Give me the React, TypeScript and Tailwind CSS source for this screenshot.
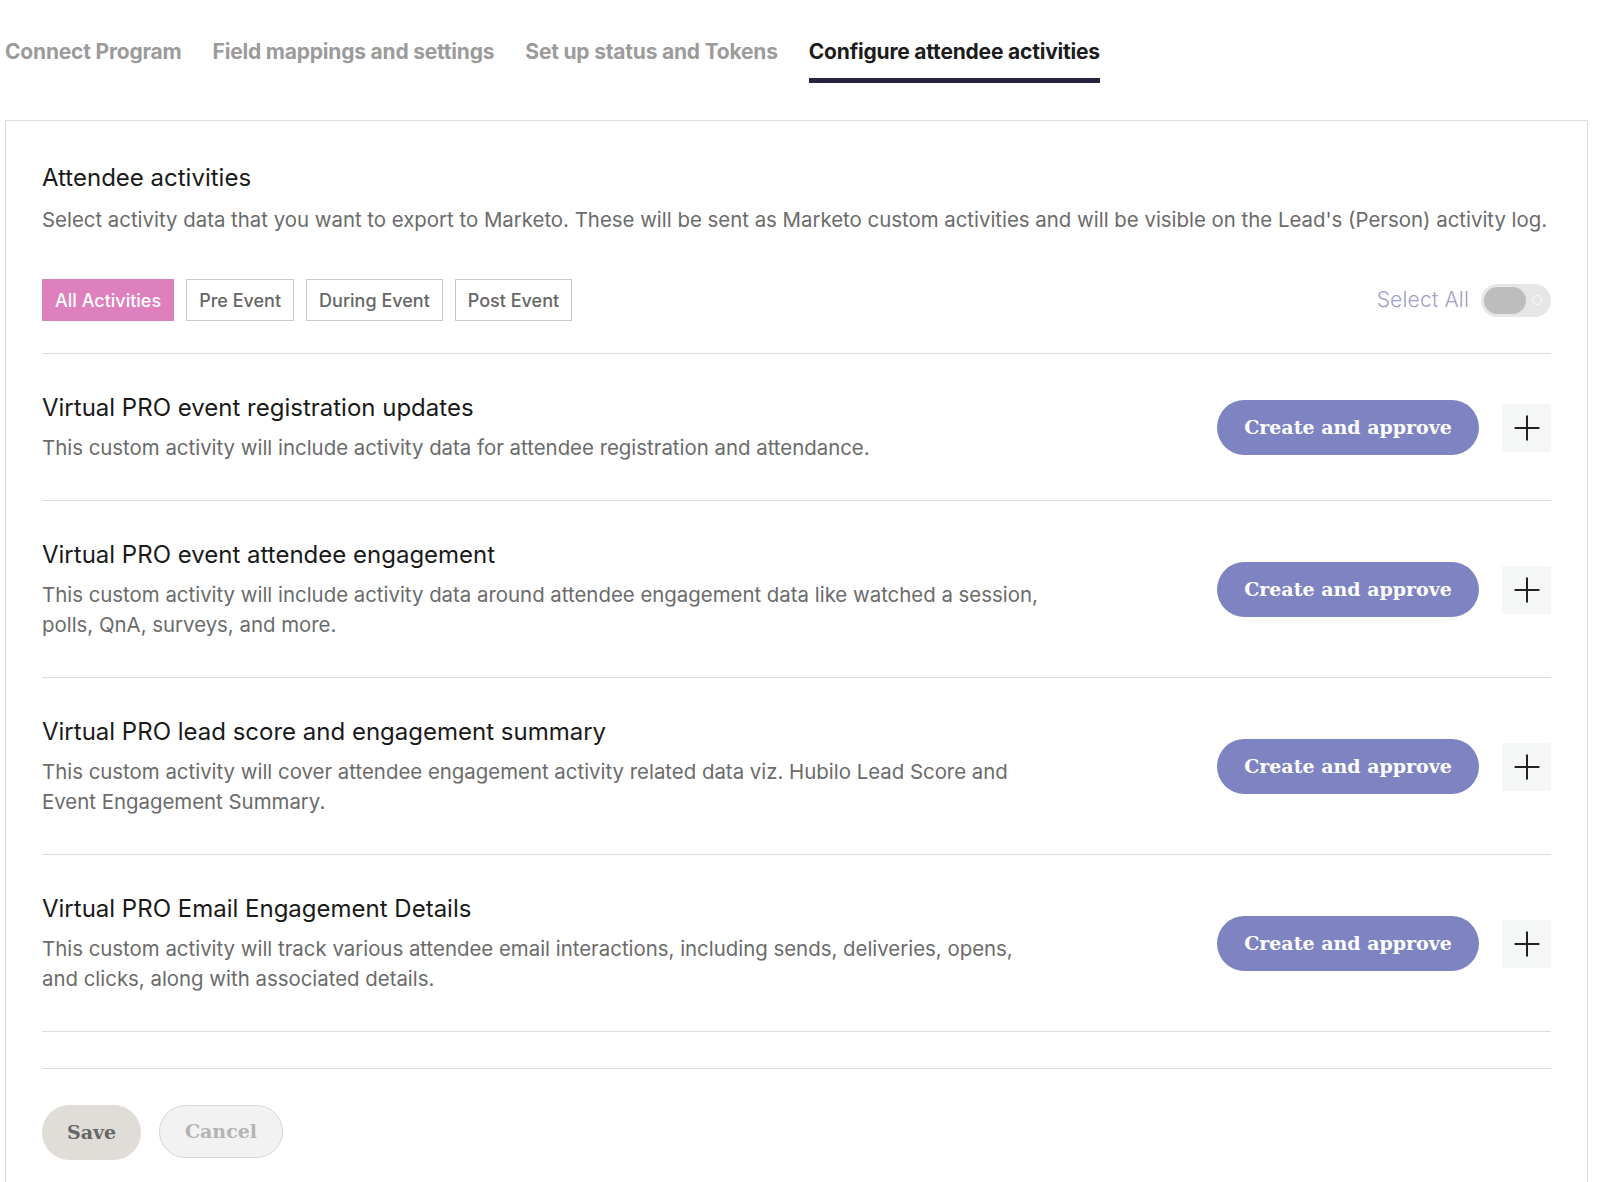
import { Plus } from "lucide-react";

const tabs = [
  { label: "Connect Program", active: false },
  { label: "Field mappings and settings", active: false },
  { label: "Set up status and Tokens", active: false },
  { label: "Configure attendee activities", active: true },
];

const filters = ["All Activities", "Pre Event", "During Event", "Post Event"];

const activities = [
  {
    title: "Virtual PRO event registration updates",
    text: "This custom activity will include activity data for attendee registration and attendance.",
  },
  {
    title: "Virtual PRO event attendee engagement",
    text: "This custom activity will include activity data around attendee engagement data like watched a session, polls, QnA, surveys, and more.",
  },
  {
    title: "Virtual PRO lead score and engagement summary",
    text: "This custom activity will cover attendee engagement activity related data viz. Hubilo Lead Score and Event Engagement Summary.",
  },
  {
    title: "Virtual PRO Email Engagement Details",
    text: "This custom activity will track various attendee email interactions, including sends, deliveries, opens, and clicks, along with associated details.",
  },
];

export default function App() {
  return (
    <div className="min-h-screen bg-white pl-[5px] pr-[18px] pt-[37px] font-['Inter',sans-serif]">
      {/* step tabs */}
      <nav className="flex gap-[31px]">
        {tabs.map((t) => (
          <div
            key={t.label}
            className={
              t.active
                ? "border-b-[5px] border-[#25243f] pb-[11px] text-[21px] font-bold leading-[30px] tracking-[-0.2px] text-[#1c1c1c]"
                : "border-b-[5px] border-transparent pb-[11px] text-[21px] font-bold leading-[30px] tracking-[-0.2px] text-[#9b9b9b]"
            }
          >
            {t.label}
          </div>
        ))}
      </nav>

      <div className="mt-[37px] border border-[#dcdcdc] px-[36px] pb-[40px] pt-[41px]">
        <h2 className="text-[24px] leading-[32px] text-[#1a1a1a]">Attendee activities</h2>
        <p className="mt-[11px] text-[20.4px] leading-[30px] text-[#6b6b6b]">
          Select activity data that you want to export to Marketo. These will be sent as Marketo custom activities and will be visible on the Lead's (Person) activity log.
        </p>

        <div className="mb-[32px] mt-[44px] flex items-center justify-between">
          <div className="flex gap-[12px]">
            {filters.map((f, i) => (
              <button
                key={f}
                className={
                  i === 0
                    ? "h-[42px] border border-[#de80be] bg-[#de80be] px-[12px] text-[18px] font-medium text-white"
                    : "h-[42px] border border-[#c9c9c9] bg-white px-[12px] text-[18px] font-medium text-[#666666]"
                }
              >
                {f}
              </button>
            ))}
          </div>
          <div className="flex items-center gap-[12px]">
            <span className="text-[21px] font-light tracking-[0.2px] text-[#a29dc8]">Select All</span>
            <div className="flex h-[33px] w-[70px] items-center justify-between rounded-full bg-[#e6e6e6] pl-[3px] pr-[9px]">
              <div className="h-[27px] w-[42px] rounded-full bg-[#bdbdbd]" />
              <div className="h-[10px] w-[10px] rounded-full border border-white" />
            </div>
          </div>
        </div>

        <div className="border-t border-[#dcdcdc]">
          {activities.map((a) => (
            <div
              key={a.title}
              className="flex items-center justify-between border-b border-[#dcdcdc] pb-[37px] pt-[38px]"
            >
              <div>
                <h3 className="text-[24px] leading-[32px] text-[#1a1a1a]">{a.title}</h3>
                <p className="mt-[9px] max-w-[996px] text-[20.4px] leading-[30px] text-[#6b6b6b]">{a.text}</p>
              </div>
              <div className="flex items-center gap-[23px]">
                <button className="h-[55px] w-[262px] rounded-full bg-[#7d84c1] font-['DejaVu_Serif',serif] text-[19px] font-bold text-white">
                  Create and approve
                </button>
                <div className="flex h-[48px] w-[49px] items-center justify-center bg-[#f5f6f6]">
                  <Plus size={40} strokeWidth={1.2} className="text-[#222222]" />
                </div>
              </div>
            </div>
          ))}
          <div className="h-[37px] border-b border-[#dcdcdc]" />
        </div>

        <div className="mt-[36px] flex gap-[18px]">
          <button className="h-[55px] w-[99px] rounded-full bg-[#e0ddd8] font-['DejaVu_Serif',serif] text-[19px] font-bold text-[#666666]">
            Save
          </button>
          <button className="h-[53px] w-[124px] rounded-full border border-[#d6d6d6] bg-[#f2f2f2] font-['DejaVu_Serif',serif] text-[19px] font-bold text-[#b3b3b3]">
            Cancel
          </button>
        </div>
      </div>
    </div>
  );
}
